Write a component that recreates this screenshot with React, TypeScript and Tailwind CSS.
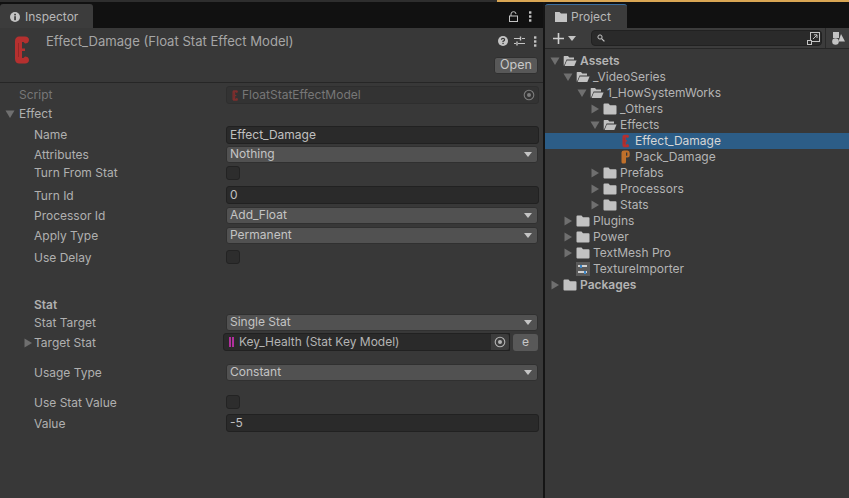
import type { ReactNode } from 'react';

const Arrow = ({ open, className = '' }: { open?: boolean; className?: string }) => (
    <svg width="10" height="10" viewBox="0 0 10 10" className={`shrink-0 ${className}`}>
        {open ? <path d="M0.5 1.5 H9.5 L5 9 Z" fill="#6f6f6f" /> : <path d="M1.5 0.5 L9 5 L1.5 9.5 Z" fill="#6f6f6f" />}
    </svg>
);

const Folder = () => (
    <svg width="14" height="12" viewBox="0 0 14 12" className="shrink-0">
        <path d="M0.5 1.5 Q0.5 0.5 1.5 0.5 H5.5 L7 2.2 H12.5 Q13.5 2.2 13.5 3.2 V10.5 Q13.5 11.5 12.5 11.5 H1.5 Q0.5 11.5 0.5 10.5 Z" fill="#c2c2c2" />
    </svg>
);

const FolderOpen = () => (
    <svg width="14" height="12" viewBox="0 0 14 12" className="shrink-0">
        <path d="M0.7 10.5 V1.5 Q0.7 1 1.3 1 H5 L6.3 2.5 H11 V4.6 H3.6 L1 10.5 Z" fill="#c2c2c2" />
        <path d="M3.8 5.4 H13.6 L11.3 11 H1.6 Z" fill="#c2c2c2" />
    </svg>
);

// red "E" script icon
const EffectIcon = ({ size = 'w-[15px] h-[28px]', color = '#b5302f' }: { size?: string; color?: string }) => (
    <svg viewBox="0 0 15 28" className={`${size} shrink-0`}>
        <path
            d="M5 0.5 C3 0.5 1 2 1 5 V23 C1 26 3 27.5 5 27.5 H11 C13.5 27.5 15 26 15 24 C15 21.5 13 20.5 11 20.5 L9.5 22 H8 V15 H11 V12.5 H8 V6 H9.5 L11 7.5 C13 7.5 15 6.5 15 4 C15 2 13.5 0.5 11 0.5 Z"
            fill={color}
        />
        <path d="M4.5 7 V21" stroke="#000000" strokeOpacity="0.18" strokeWidth="1" />
    </svg>
);

const PackIcon = () => (
    <svg viewBox="0 0 9 14" className="w-[9px] h-[14px] shrink-0">
        <path d="M3 0.5 H6.5 Q8.7 0.5 8.7 3 V5.5 Q8.7 7.5 6.5 7.5 H5 V12 Q5 13.5 3.5 13.5 H2 Q0.5 13.5 0.5 12 V2.5 Q0.5 0.5 3 0.5 Z M5 2.5 V5.8 H6.3 V2.5 Z" fill="#c0702b" fillRule="evenodd" />
    </svg>
);

const Target = ({ color = '#b4b4b4' }: { color?: string }) => (
    <svg width="12" height="12" viewBox="0 0 12 12">
        <circle cx="6" cy="6" r="4.8" fill="none" stroke={color} strokeWidth="1.1" />
        <circle cx="6" cy="6" r="2" fill={color} />
    </svg>
);

const Row = ({ label, className, labelClass = 'pl-[34px] pt-[2px]', children }: { label: string; className: string; labelClass?: string; children?: ReactNode }) => (
    <div className={`flex items-center ${className}`}>
        <div className={`w-[226px] shrink-0 ${labelClass}`}>{label}</div>
        {children}
    </div>
);

const Select = ({ value }: { value: string }) => (
    <div className="w-[312px] h-[17px] flex items-center justify-between rounded-[3px] bg-[#515151] border border-[#303030] pl-[3px] pr-[5px] text-[#c4c4c4]">
        <span>{value}</span>
        <svg width="8" height="5" viewBox="0 0 8 5"><path d="M0 0 H8 L4 5 Z" fill="#c4c4c4" /></svg>
    </div>
);

const Input = ({ value }: { value: string }) => (
    <div className="w-[313px] h-[18px] flex items-center rounded-[3px] bg-[#2a2a2a] border border-[#212121] px-[3px] text-[#c0c0c0]">{value}</div>
);

const Check = () => <div className="w-[14px] h-[14px] rounded-[3px] bg-[#2d2d2d] border border-[#232323]" />;

type TreeItem = { name: string; pad: string; arrow?: 'open' | 'closed'; icon: 'open' | 'folder' | 'effect' | 'pack' | 'texture'; bold?: boolean; selected?: boolean };

const tree: TreeItem[] = [
    { name: 'Assets', pad: 'pl-[5px]', arrow: 'open', icon: 'open', bold: true },
    { name: '_VideoSeries', pad: 'pl-[18px]', arrow: 'open', icon: 'open' },
    { name: '1_HowSystemWorks', pad: 'pl-[32px]', arrow: 'open', icon: 'open' },
    { name: '_Others', pad: 'pl-[45px]', arrow: 'closed', icon: 'folder' },
    { name: 'Effects', pad: 'pl-[45px]', arrow: 'open', icon: 'open' },
    { name: 'Effect_Damage', pad: 'pl-[60px]', icon: 'effect', selected: true },
    { name: 'Pack_Damage', pad: 'pl-[60px]', icon: 'pack' },
    { name: 'Prefabs', pad: 'pl-[45px]', arrow: 'closed', icon: 'folder' },
    { name: 'Processors', pad: 'pl-[45px]', arrow: 'closed', icon: 'folder' },
    { name: 'Stats', pad: 'pl-[45px]', arrow: 'closed', icon: 'folder' },
    { name: 'Plugins', pad: 'pl-[18px]', arrow: 'closed', icon: 'folder' },
    { name: 'Power', pad: 'pl-[18px]', arrow: 'closed', icon: 'folder' },
    { name: 'TextMesh Pro', pad: 'pl-[18px]', arrow: 'closed', icon: 'folder' },
    { name: 'TextureImporter', pad: 'pl-[18px]', icon: 'texture' },
    { name: 'Packages', pad: 'pl-[5px]', arrow: 'closed', icon: 'folder', bold: true },
];

const TreeIcon = ({ icon }: { icon: TreeItem['icon'] }) => {
    if (icon === 'open') return <FolderOpen />;
    if (icon === 'folder') return <Folder />;
    if (icon === 'effect') return <EffectIcon size="w-[7px] h-[14px]" />;
    if (icon === 'pack') return <PackIcon />;
    return (
        <svg width="14" height="14" viewBox="0 0 14 14" className="shrink-0">
            <rect width="14" height="14" fill="#5a5a5a" />
            <path d="M2 4 H11 M2 10 H11" stroke="#d0d0d0" strokeWidth="2" />
            <rect x="4" y="3" width="2" height="3" fill="#3d86c6" />
            <rect x="8" y="9" width="2" height="3" fill="#3d86c6" />
        </svg>
    );
};

const TreeRow = ({ item }: { item: TreeItem }) => (
    <div className={`h-[16px] flex items-center ${item.pad} ${item.selected ? 'bg-[#2c5d87] text-[#d6d6d6]' : 'text-[#b4b4b4]'} ${item.bold ? 'font-semibold' : ''}`}>
        <div className="w-[12px] shrink-0">{item.arrow && <Arrow open={item.arrow === 'open'} />}</div>
        <div className="w-[16px] flex justify-center shrink-0"><TreeIcon icon={item.icon} /></div>
        <span className="pl-[2px]">{item.name}</span>
    </div>
);

export default function App() {
    return (
        <div className="w-[849px] h-[498px] flex flex-col overflow-hidden bg-[#111111] font-['Inter',sans-serif] text-[12px] leading-none text-[#b0b0b0]">
            <div className="h-[2px] flex shrink-0">
                <div className="w-[497px] bg-[#2e2e2e]" />
                <div className="flex-1 bg-[#d9a654]" />
            </div>
            <div className="flex-1 flex min-h-0">
                <div className="w-[543px] flex flex-col">
                    <div className="h-[26px] flex items-end justify-between shrink-0 pr-[11px]">
                        <div className="w-[93px] h-[24px] flex items-center gap-[5px] rounded-t-[3px] bg-[#3c3c3c] pl-[10px] pt-[1px] text-[#b8b8b8]">
                            <svg width="10" height="10" viewBox="0 0 10 10"><circle cx="5" cy="5" r="5" fill="#c4c4c4" /><rect x="4.2" y="4.2" width="1.7" height="4" fill="#3c3c3c" /><rect x="4.2" y="1.8" width="1.7" height="1.6" fill="#3c3c3c" /></svg>
                            <span>Inspector</span>
                        </div>
                        <div className="h-[24px] flex items-center gap-[10px]">
                            <svg width="10" height="11" viewBox="0 0 10 11"><rect x="0.5" y="5" width="8" height="5.5" fill="none" stroke="#c4c4c4" /><path d="M2 5 V3 Q2 0.7 4.5 0.7 Q7 0.7 7 3" fill="none" stroke="#c4c4c4" /></svg>
                            <svg width="3" height="11" viewBox="0 0 3 11"><rect width="2.4" height="2.4" y="0.3" fill="#c4c4c4" /><rect width="2.4" height="2.4" y="4.3" fill="#c4c4c4" /><rect width="2.4" height="2.4" y="8.3" fill="#c4c4c4" /></svg>
                        </div>
                    </div>
                    <div className="flex-1 bg-[#383838]">
                        <div className="h-[55px] flex border-b border-[#262626] box-border">
                            <div className="pl-[14px] pt-[8px] w-[46px] shrink-0"><EffectIcon /></div>
                            <div className="flex-1 pt-[7px] text-[13.1px] text-[#a6a6a6]">Effect_Damage (Float Stat Effect Model)</div>
                            <div className="flex flex-col items-end pr-[5px] pt-[7px]">
                                <div className="flex items-center h-[12px] mr-[1px]">
                                    <svg width="10" height="10" viewBox="0 0 10 10"><circle cx="5" cy="5" r="5" fill="#c4c4c4" /><path d="M3.4 3.8 Q3.4 2.3 5 2.3 Q6.6 2.3 6.6 3.7 Q6.6 4.6 5 5.4 V6" fill="none" stroke="#383838" strokeWidth="1.2" /><rect x="4.4" y="6.8" width="1.3" height="1.3" fill="#383838" /></svg>
                                    <svg width="11" height="10" viewBox="0 0 11 10" className="ml-[6px]"><path d="M0 2.5 H6 M8 2.5 H11 M0 7.5 H2 M4 7.5 H11" stroke="#c4c4c4" /><path d="M6.5 0.5 V4.5 M3 5.5 V9.5" stroke="#c4c4c4" strokeWidth="1.4" /></svg>
                                    <svg width="3" height="11" viewBox="0 0 3 11" className="ml-[9px]"><rect width="2.4" height="2.4" y="0.3" fill="#c4c4c4" /><rect width="2.4" height="2.4" y="4.3" fill="#c4c4c4" /><rect width="2.4" height="2.4" y="8.3" fill="#c4c4c4" /></svg>
                                </div>
                                <div className="mt-[10px] w-[44px] h-[17px] flex items-center justify-center rounded-[3px] bg-[#585858] border border-[#303030] text-[12.5px] text-[#c8c8c8]">Open</div>
                            </div>
                        </div>
                        <Row label="Script" className="mt-[2px] h-[20px] text-[#777777]" labelClass="pl-[19px]">
                            <div className="w-[313px] h-[18px] flex items-center justify-between rounded-[3px] bg-[#333333] border border-[#2e2e2e] pl-[5px] pr-[3px]">
                                <span className="flex items-center gap-[4px]"><EffectIcon size="w-[6px] h-[11px]" color="#7c2f2e" />FloatStatEffectModel</span>
                                <Target color="#7d7d7d" />
                            </div>
                        </Row>
                        <div className="h-[18px] flex items-center pl-[5px] gap-[4px]"><Arrow open />Effect</div>
                        <div className="h-[2px]" />
                        <Row label="Name" className="h-[19px]" labelClass="pl-[34px]"><Input value="Effect_Damage" /></Row>
                        <Row label="Attributes" className="h-[20px]"><Select value="Nothing" /></Row>
                        <Row label="Turn From Stat" className="h-[18px]" labelClass="pl-[34px]"><Check /></Row>
                        <Row label="Turn Id" className="mt-[3px] h-[20px]"><Input value="0" /></Row>
                        <Row label="Processor Id" className="h-[20px]"><Select value="Add_Float" /></Row>
                        <Row label="Apply Type" className="h-[20px]"><Select value="Permanent" /></Row>
                        <Row label="Use Delay" className="mt-[2px] h-[20px]"><Check /></Row>
                        <div className="mt-[29px] h-[17px] flex items-center pl-[34px] font-semibold">Stat</div>
                        <Row label="Stat Target" className="h-[18px]"><Select value="Single Stat" /></Row>
                        <div className="mt-[1px] h-[20px] flex items-center">
                            <div className="w-[223px] shrink-0 flex items-center pl-[23px] pt-[2px] gap-[1px]"><Arrow />Target Stat</div>
                            <div className="w-[287px] h-[18px] flex items-center justify-between rounded-l-[3px] bg-[#2a2a2a] border border-[#212121] pl-[5px] text-[#b4b4b4]">
                                <span className="flex items-center gap-[5px]">
                                    <span className="flex gap-[1px]"><span className="w-[2px] h-[10px] bg-[#b0309c]" /><span className="w-[2px] h-[10px] bg-[#b0309c]" /></span>
                                    Key_Health (Stat Key Model)
                                </span>
                                <span className="w-[18px] h-full flex items-center justify-center bg-[#3c3c3c] rounded-r-[3px]"><Target color="#b4b4b4" /></span>
                            </div>
                            <div className="ml-[3px] w-[25px] h-[17px] flex items-center justify-center rounded-[3px] bg-[#585858] text-[#c8c8c8]">e</div>
                        </div>
                        <Row label="Usage Type" className="mt-[10px] h-[20px]"><Select value="Constant" /></Row>
                        <Row label="Use Stat Value" className="mt-[10px] h-[20px]"><Check /></Row>
                        <Row label="Value" className="mt-[1px] h-[20px]"><Input value="-5" /></Row>
                    </div>
                </div>
                <div className="w-[2px] shrink-0 bg-[#151515]" />
                <div className="flex-1 flex flex-col min-w-0">
                    <div className="h-[26px] shrink-0 flex items-end">
                        <div className="w-[82px] h-[24px] flex items-center gap-[4px] border-t border-[#3a6d9e] rounded-t-[3px] bg-[#3c3c3c] pl-[10px] pt-[1px] text-[#b8b8b8]">
                            <svg width="12" height="10" viewBox="0 0 12 10"><path d="M0 0 H4.5 L6 1.5 H12 V10 H0 Z" fill="#c4c4c4" /></svg>
                            <span>Project</span>
                        </div>
                    </div>
                    <div className="flex-1 bg-[#383838]">
                        <div className="h-[20px] flex items-center bg-[#3c3c3c] border-b border-[#262626] box-content">
                            <svg width="13" height="13" viewBox="0 0 13 13" className="ml-[7px]"><path d="M6.5 1 V12 M1 6.5 H12" stroke="#d0d0d0" strokeWidth="1.6" /></svg>
                            <svg width="8" height="5" viewBox="0 0 8 5" className="ml-[3px]"><path d="M0 0 H8 L4 5 Z" fill="#c4c4c4" /></svg>
                            <div className="ml-[15px] w-[231px] h-[16px] flex items-center justify-between rounded-[4px] bg-[#2a2a2a] border border-[#212121] pl-[5px] pr-[1px]">
                                <svg width="8" height="8" viewBox="0 0 8 8"><circle cx="3" cy="3" r="2.1" fill="none" stroke="#c4c4c4" /><path d="M4.6 4.6 L7.4 7.4" stroke="#c4c4c4" strokeWidth="1.3" /></svg>
                                <svg width="13" height="13" viewBox="0 0 13 13"><rect x="3.5" y="0.5" width="9" height="9" fill="none" stroke="#c4c4c4" /><rect x="0.5" y="8.5" width="4" height="4" fill="#2a2a2a" stroke="#c4c4c4" /><path d="M6 7 L10 3 M7 2.8 H10 V6" fill="none" stroke="#c4c4c4" /></svg>
                            </div>
                            <div className="ml-[3px] w-[1px] h-full bg-[#2a2a2a]" />
                            <svg width="13" height="13" viewBox="0 0 13 13" className="ml-[6px]"><rect x="1" y="0" width="6" height="6" fill="#c4c4c4" /><circle cx="3.5" cy="9.5" r="3.3" fill="#c4c4c4" /><path d="M9 2 L13 9.5 H6.5 Z" fill="#c4c4c4" /></svg>
                        </div>
                        <div className="pt-[4px]">
                            {tree.map((item) => <TreeRow key={item.name} item={item} />)}
                        </div>
                    </div>
                </div>
            </div>
        </div>
    );
}
